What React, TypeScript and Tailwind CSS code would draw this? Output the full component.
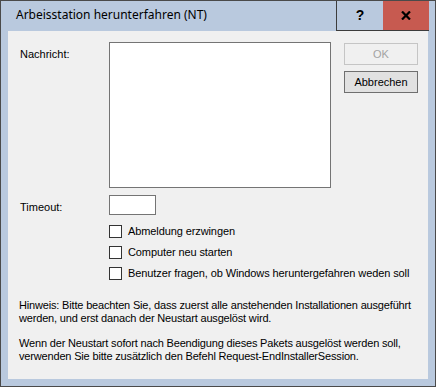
import React from "react";

const ui = { fontFamily: '"Liberation Sans", Arial, sans-serif' };
const title = { fontFamily: '"Noto Sans", "Open Sans", sans-serif' };

function Check({ label }: { label: string }) {
  return (
    <div className="flex items-center h-[21px]">
      <span className="w-[13px] h-[13px] border border-[#333333] bg-white shrink-0" />
      <span className="ml-[6px] text-[11px] text-black whitespace-nowrap tracking-[-0.1px]">{label}</span>
    </div>
  );
}

export default function App() {
  return (
    <div
      className="w-[436px] h-[387px] border border-[#4a4a4a] bg-[#b9c9de] flex flex-col"
      style={ui}
    >
      {/* Title bar */}
      <div className="h-[30px] flex shrink-0">
        <div className="flex-1 pl-[15px] pt-[5px] text-[12px] text-black" style={title}>
          Arbeisstation herunterfahren (NT)
        </div>
        <div className="w-[47px] h-[30px] border-l border-b border-[#3c3c3c] flex items-center justify-center text-[14px] font-bold text-black">
          ?
        </div>
        <div className="w-[46px] h-[30px] border-b border-[#3c3c3c] bg-[#c75a50] flex items-center justify-center">
          <svg width="10" height="9" viewBox="0 0 10 9">
            <path d="M1 0.5 L9 8.5 M9 0.5 L1 8.5" stroke="#000" strokeWidth="2.2" />
          </svg>
        </div>
        <div className="w-[6px]" />
      </div>

      {/* Client area */}
      <div className="flex-1 mx-[7px] mb-[7px] bg-[#f0f0f0] pl-[12px] pt-[11px] text-[11px] text-black">
        <div className="flex">
          <div className="w-[89px] pt-[4px]">Nachricht:</div>
          <div className="w-[222px] h-[146px] border border-[#747474] bg-white" />
          <div className="ml-[13px] mt-px flex flex-col gap-[6px]">
            <div className="w-[74px] h-[22px] border border-[#c5c5c5] bg-[#f0f0f0] text-[#a3a3a3] flex items-center justify-center">
              OK
            </div>
            <div className="w-[74px] h-[22px] border border-[#6f6f6f] bg-[#e1e1e1] flex items-center justify-center">
              Abbrechen
            </div>
          </div>
        </div>

        <div className="flex mt-[7px]">
          <div className="w-[89px] pt-[4px]">Timeout:</div>
          <div className="w-[47px] h-[20px] border border-[#747474] bg-white" />
        </div>

        <div className="ml-[89px] mt-[5px] flex flex-col">
          <Check label="Abmeldung erzwingen" />
          <Check label="Computer neu starten" />
          <Check label="Benutzer fragen, ob Windows heruntergefahren weden soll" />
        </div>

        <div className="mt-[15px] ml-[-1px] leading-[13px] whitespace-nowrap tracking-[-0.17px]">
          Hinweis: Bitte beachten Sie, dass zuerst alle anstehenden Installationen ausgeführt
          <br />
          werden, und erst danach der Neustart ausgelöst wird.
        </div>
        <div className="mt-[12px] ml-[-1px] leading-[13px] whitespace-nowrap tracking-[-0.17px]">
          Wenn der Neustart sofort nach Beendigung dieses Pakets ausgelöst werden soll,
          <br />
          verwenden Sie bitte zusätzlich den Befehl Request-EndInstallerSession.
        </div>
      </div>
    </div>
  );
}
